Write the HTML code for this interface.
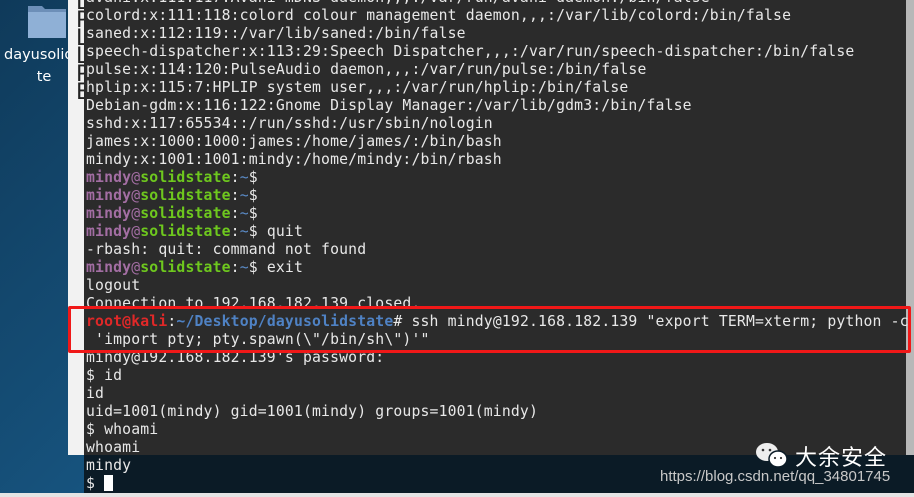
<!DOCTYPE html>
<html><head><meta charset="utf-8"><style>
*{margin:0;padding:0}
body{width:914px;height:497px;overflow:hidden;position:relative;background:linear-gradient(135deg,#0f3a5a,#1a5f8f 60%,#2a7fbf);font-family:"DejaVu Sans Mono","Liberation Mono",monospace}
.icon{position:absolute;left:28px;top:2px;width:38px;height:36px}
.lbl{position:absolute;left:4px;top:44px;width:80px;text-align:center;color:#fff;font:14.5px "DejaVu Sans","Liberation Sans",sans-serif;line-height:22px;white-space:nowrap;overflow:hidden}
.win{position:absolute;left:68px;top:0;width:16px;height:455px;background:#f2f2f2;overflow:hidden;font:22px "DejaVu Sans",sans-serif;color:#222;line-height:18px}
.term{position:absolute;left:84px;top:0;width:822px;height:455px;background:#2b2b2b}
.bar{position:absolute;left:84px;top:455px;width:830px;height:38px;background:#0b1b26}
.right{position:absolute;left:906px;top:0;width:8px;height:455px;background:#b8b8b8}
.bot{position:absolute;left:0;top:493px;width:914px;height:4px;background:#e4e4e4}
pre{position:absolute;left:86px;top:-11px;font-size:14.75px;letter-spacing:0.16px;line-height:18px;color:#e8e8e8;font-family:"DejaVu Sans Mono",monospace;white-space:pre}
.m{color:#a36ea3;font-weight:bold}.a{color:#a36ea3}.s{color:#6ec81e;font-weight:bold}.t{color:#5b8cc8}.r{color:#e02828;font-weight:bold}.p{color:#4f82c4;font-weight:bold}
.box{position:absolute;left:68px;top:306px;width:837px;height:41px;border:3px solid #f01818;border-radius:2px}
.cur{display:inline-block;width:9px;height:16px;background:#fff;vertical-align:-3px}
.wm{position:absolute;left:755px;top:440px;color:#fff;font:22px "Noto Sans CJK SC",sans-serif;letter-spacing:1px}
.url{position:absolute;left:660px;top:468px;color:#c8c8c8;font:15px "Liberation Sans",sans-serif}
</style></head><body>
<svg class="icon" viewBox="0 0 38 36"><path d="M0 4h14l3 3h21v29H0z" fill="#6d8fb8"/><path d="M0 10h38v26H0z" fill="#8fb0d6"/></svg>
<div class="lbl">dayusolidsta<br>te</div>
<div class="win"><div style="margin-left:8px;margin-top:-6px">L<br>P<br>L<br>L<br>P<br>E</div></div>
<div class="term"></div>
<div class="bar"></div>
<div class="right"></div>
<div class="bot"></div>
<pre>avahi:x:111:117:Avahi mDNS daemon,,,:/var/run/avahi-daemon:/bin/false
colord:x:111:118:colord colour management daemon,,,:/var/lib/colord:/bin/false
saned:x:112:119::/var/lib/saned:/bin/false
speech-dispatcher:x:113:29:Speech Dispatcher,,,:/var/run/speech-dispatcher:/bin/false
pulse:x:114:120:PulseAudio daemon,,,:/var/run/pulse:/bin/false
hplip:x:115:7:HPLIP system user,,,:/var/run/hplip:/bin/false
Debian-gdm:x:116:122:Gnome Display Manager:/var/lib/gdm3:/bin/false
sshd:x:117:65534::/run/sshd:/usr/sbin/nologin
james:x:1000:1000:james:/home/james/:/bin/bash
mindy:x:1001:1001:mindy:/home/mindy:/bin/rbash
<span class="m">mindy</span><span class="a">@</span><span class="s">solidstate</span>:<span class="t">~</span>$
<span class="m">mindy</span><span class="a">@</span><span class="s">solidstate</span>:<span class="t">~</span>$
<span class="m">mindy</span><span class="a">@</span><span class="s">solidstate</span>:<span class="t">~</span>$
<span class="m">mindy</span><span class="a">@</span><span class="s">solidstate</span>:<span class="t">~</span>$ quit
-rbash: quit: command not found
<span class="m">mindy</span><span class="a">@</span><span class="s">solidstate</span>:<span class="t">~</span>$ exit
logout
Connection to 192.168.182.139 closed.
<span class="r">root@kali</span>:<span class="p">~/Desktop/dayusolidstate</span># ssh mindy@192.168.182.139 "export TERM=xterm; python -c
 'import pty; pty.spawn(\"/bin/sh\")'"
mindy@192.168.182.139's password:
$ id
id
uid=1001(mindy) gid=1001(mindy) groups=1001(mindy)
$ whoami
whoami
mindy
$ <span class="cur"></span></pre>
<div class="box"></div>
<svg style="position:absolute;left:754px;top:440px" width="36" height="30" viewBox="0 0 36 30"><ellipse cx="13" cy="12" rx="11" ry="9" fill="#eee"/><ellipse cx="24" cy="19" rx="9" ry="8" fill="#fff" stroke="#0b1b26" stroke-width="1.5"/><circle cx="9" cy="10" r="1.3" fill="#333"/><circle cx="16" cy="10" r="1.3" fill="#333"/><circle cx="21" cy="18" r="1.1" fill="#333"/><circle cx="27" cy="18" r="1.1" fill="#333"/></svg>
<div class="wm" style="left:795px">大余安全</div>
<div class="url">https://blog.csdn.net/qq_34801745</div>
</body></html>
